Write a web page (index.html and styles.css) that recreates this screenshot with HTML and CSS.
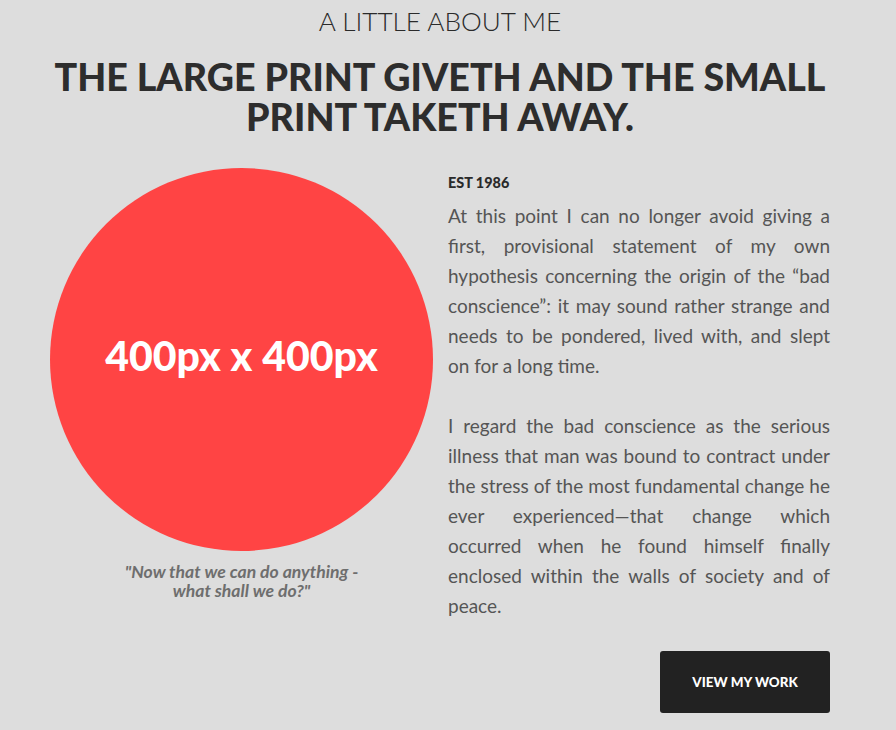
FILE: index.html
```html
<!DOCTYPE html>
<html>
<head>
<meta charset="utf-8">
<link rel="stylesheet" href="styles.css">
</head>
<body>
<section class="about">
  <h2 class="eyebrow">A LITTLE ABOUT ME</h2>
  <h1 class="title">THE LARGE PRINT GIVETH AND THE SMALL PRINT TAKETH AWAY.</h1>
  <div class="cols">
    <div class="left">
      <div class="circle"><span>400px x 400px</span></div>
      <p class="quote">"Now that we can do anything -<br>what shall we do?"</p>
    </div>
    <div class="right">
      <h3 class="est">EST 1986</h3>
      <p class="body">At this point I can no longer avoid giving a first, provisional statement of my own hypothesis concerning the origin of the “bad conscience”: it may sound rather strange and needs to be pondered, lived with, and slept on for a long time.</p>
      <p class="body">I regard the bad conscience as the serious illness that man was bound to contract under the stress of the most fundamental change he ever experienced—that change which occurred when he found himself finally enclosed within the walls of society and of peace.</p>
      <div class="actions"><a class="btn" href="#">VIEW MY WORK</a></div>
    </div>
  </div>
</section>
</body>
</html>
```

FILE: styles.css
```css
html, body {
  margin: 0;
  padding: 0;
  background: #dddddd;
}
body {
  font-family: Lato, "Open Sans", "Noto Sans", sans-serif;
  color: #333;
}
.about {
  width: 780px;
  margin: 0 0 0 50px;
}
.eyebrow {
  margin: 3px 0 0;
  text-align: center;
  font-weight: 300;
  font-size: 26.2px;
  line-height: 36px;
  color: #2a2a2a;
}
.title {
  margin: 18px 0 0;
  text-align: center;
  font-weight: 900;
  font-size: 37.6px;
  line-height: 40px;
  color: #2d2d2d;
}
.cols {
  display: grid;
  grid-template-columns: 383px 382px;
  column-gap: 15px;
  margin-top: 31px;
}
.circle {
  width: 383px;
  height: 383px;
  border-radius: 50%;
  background: #ff4444;
  display: flex;
  align-items: center;
  justify-content: center;
}
.circle span {
  color: #fff;
  font-weight: 900;
  font-size: 41px;
  margin-top: -8px;
}
.quote {
  margin: 11px 0 0;
  text-align: center;
  font-style: italic;
  font-weight: 700;
  font-size: 17.6px;
  line-height: 19px;
  color: #6e6e6e;
}
.right {
  padding-top: 7px;
}
.est {
  margin: 0;
  font-size: 14.4px;
  font-weight: 900;
  line-height: 16px;
  color: #2a2a2a;
}
.body {
  margin: 10px 0 30px;
  font-size: 19px;
  line-height: 30px;
  text-align: justify;
  color: #555;
}
.body + .body {
  margin-top: 0;
}
.actions {
  display: flex;
  justify-content: flex-end;
}
.btn {
  display: inline-flex;
  align-items: center;
  justify-content: center;
  width: 170px;
  height: 62px;
  background: #222;
  color: #fff;
  border-radius: 3px;
  text-decoration: none;
  font-weight: 900;
  font-size: 13.4px;
}
```
